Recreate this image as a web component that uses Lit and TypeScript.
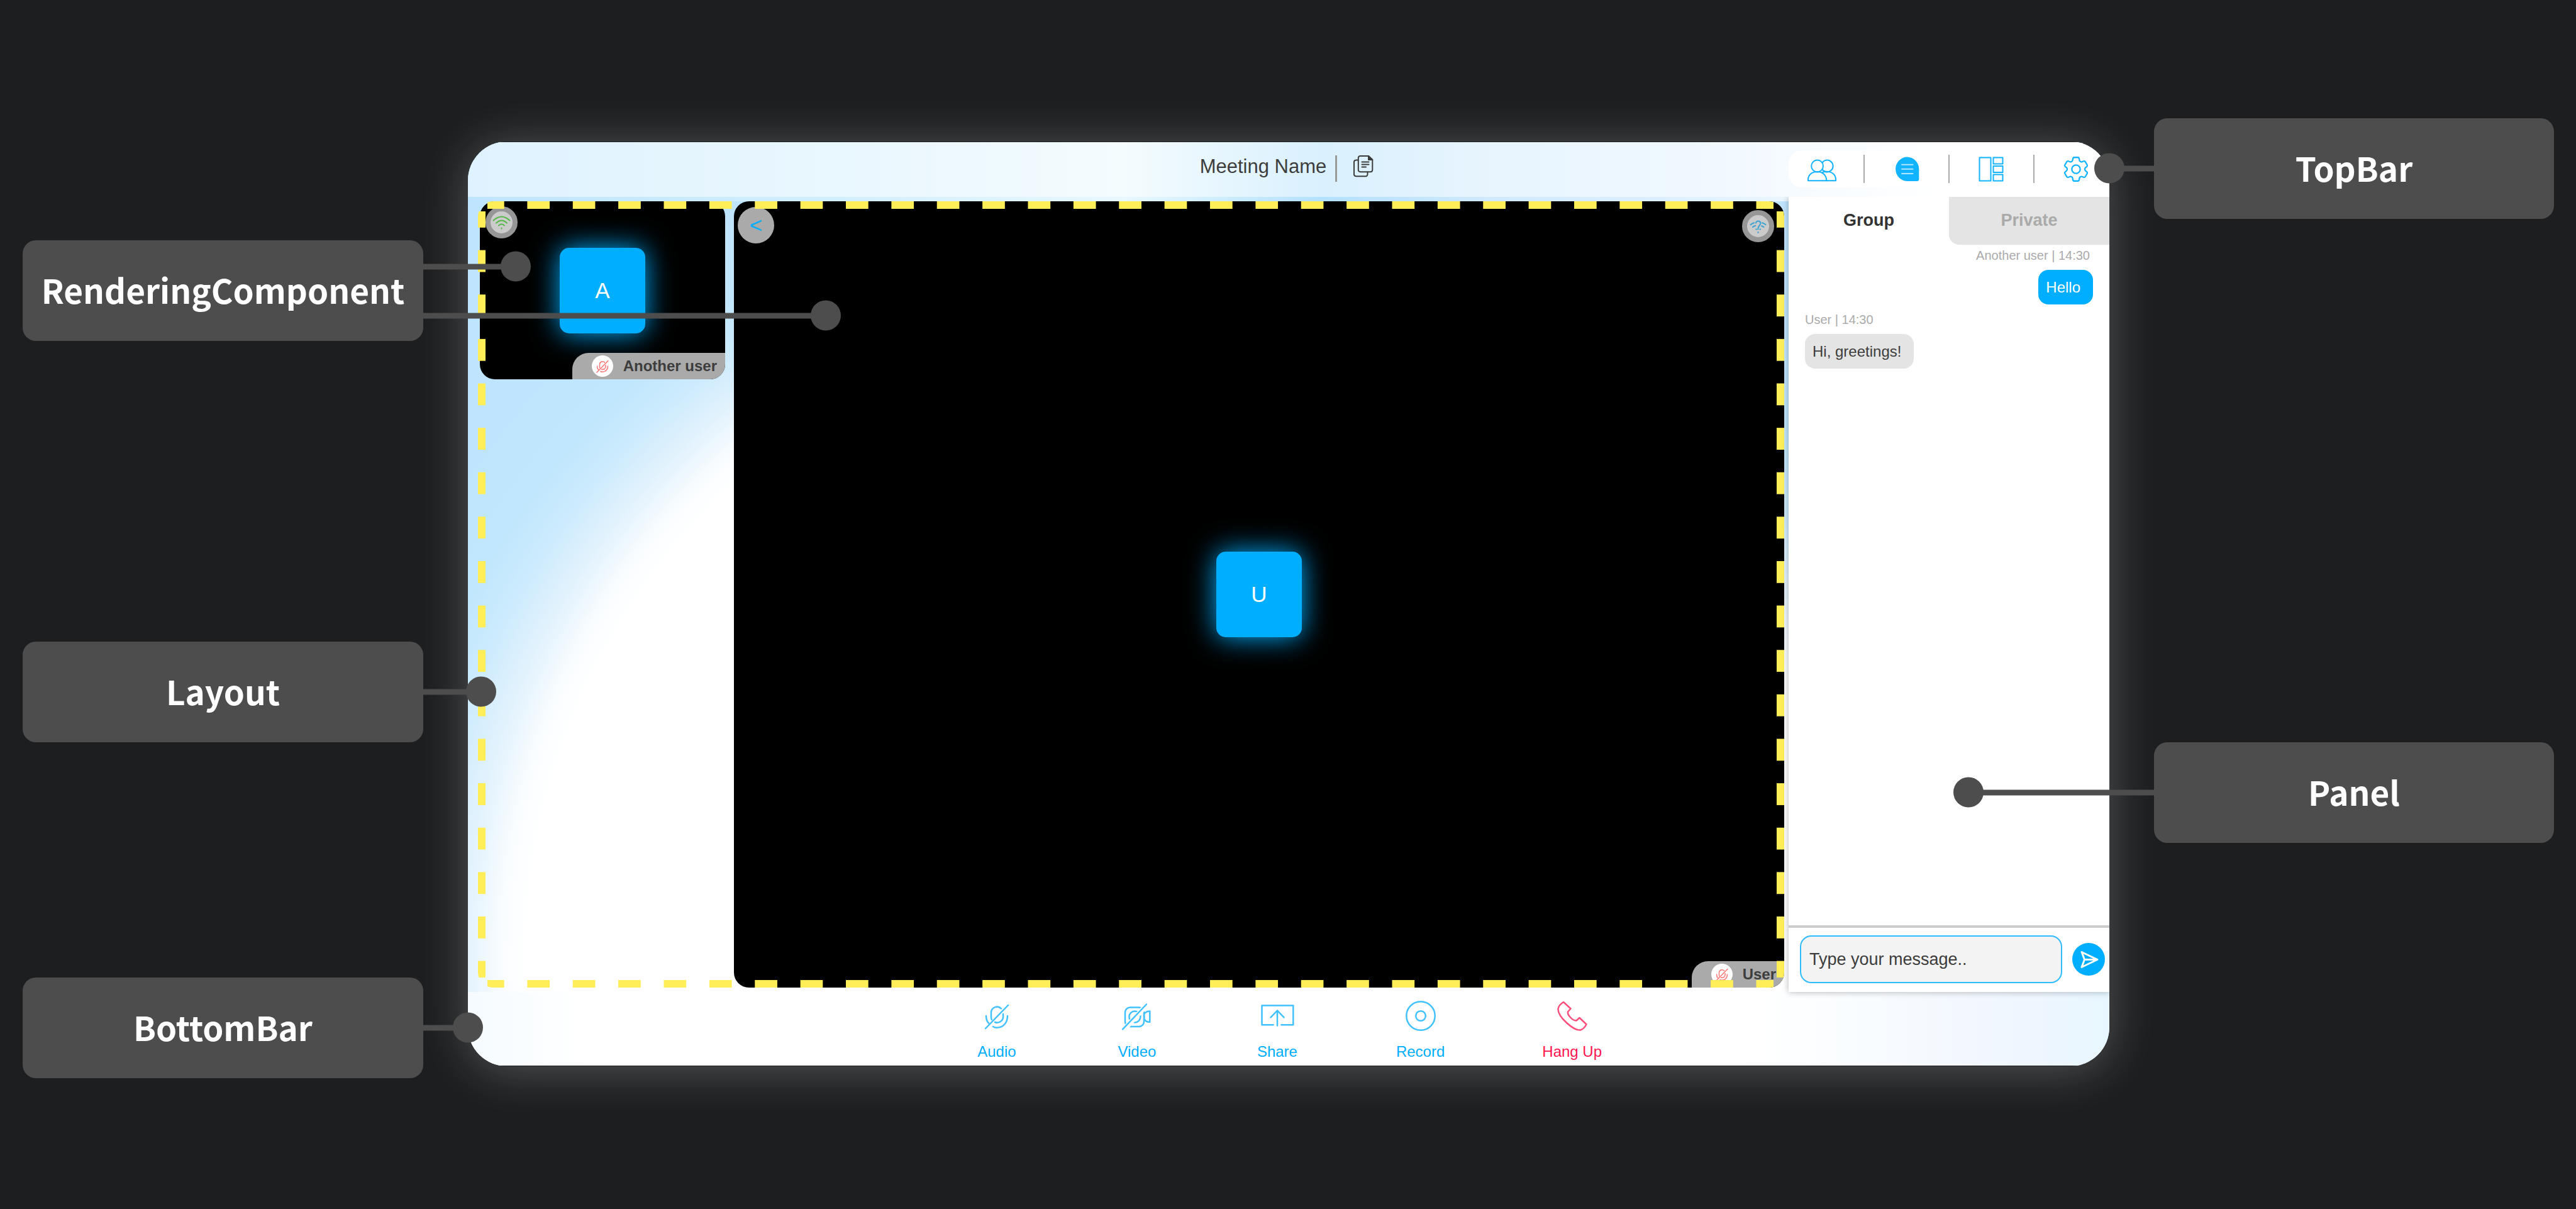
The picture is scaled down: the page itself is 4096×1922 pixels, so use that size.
import { LitElement, html, css, svg } from "lit";
import { customElement, property, state } from "lit/decorators.js";
import { classMap } from "lit/directives/class-map.js";
import { styleMap } from "lit/directives/style-map.js";

const micOff = svg`
  <path d="M37 18.5A9.3 9.3 0 0 0 21 24V32C21 33.5 21.2 34.6 21.8 36" />
  <path d="M40 27V32A9.5 9.5 0 0 1 27 40" />
  <path d="M13 30C13 35 14 38.5 17 41.5" />
  <path d="M24 47C26 48.3 28 48.7 30 48.7C40 48.7 47 41 47 30" />
  <path d="M12 50L48 13" />`;

const icons = {
  copy: svg`
    <path d="M7.5 7.5H4A3.3 3.3 0 0 0 1 11V30A3.3 3.3 0 0 0 4 33.3H19A3.3 3.3 0 0 0 22.5 30V26.5" />
    <path d="M24 1H11A3.3 3.3 0 0 0 7.8 4.3V23A3.3 3.3 0 0 0 11 26.2H27A3.3 3.3 0 0 0 30.3 23V7Z" />
    <path d="M24 1V7H30.3Z" fill="currentColor" />
    <path d="M13.5 10.5H24.5M13.5 14.5H24.5M13.5 18.5H20" />`,
  people: svg`
    <circle cx="17.6" cy="20" r="9.4" />
    <path d="M26 14A9.4 9.4 0 1 1 26 26" />
    <path d="M3 43.2V41.5C3 34 9 29 17.5 29S32 34 32.4 43.2Z" />
    <path d="M26 30C28 29 31 28.8 33 28.8C41 28.8 47 34 47 41.5V43.2H32" />`,
  chat: svg`
    <path d="M25 5.5A19.3 19.3 0 0 0 25 44H41.5A3 3 0 0 0 44.3 41V25A19.4 19.4 0 0 0 25 5.5Z" fill="currentColor" stroke="none" />
    <path d="M17 17.7H34.5M17 24.8H34.5M17 31.9H34.5" stroke="#b4e6ff" />`,
  layout: svg`
    <rect x="6.5" y="6.5" width="18" height="37" />
    <rect x="28.5" y="6.5" width="15" height="10" />
    <rect x="28.5" y="20" width="15" height="10" />
    <rect x="28.5" y="33.5" width="15" height="10" />`,
  gear: svg`
    <g transform="scale(2.0833)" stroke-width="1.1">
      <path d="M9.594 3.94c.09-.542.56-.94 1.11-.94h2.593c.55 0 1.02.398 1.11.94l.213 1.281c.063.374.313.686.645.87.074.04.147.083.22.127.325.196.72.257 1.075.124l1.217-.456a1.125 1.125 0 0 1 1.37.49l1.296 2.247a1.125 1.125 0 0 1-.26 1.431l-1.003.827c-.293.241-.438.613-.43.992a7.723 7.723 0 0 1 0 .255c-.008.378.137.75.43.991l1.004.827c.424.35.534.955.26 1.43l-1.298 2.247a1.125 1.125 0 0 1-1.369.491l-1.217-.456c-.355-.133-.75-.072-1.076.124a6.47 6.47 0 0 1-.22.128c-.331.183-.581.495-.644.869l-.213 1.281c-.09.543-.56.94-1.11.94h-2.594c-.55 0-1.019-.398-1.11-.94l-.213-1.281c-.062-.374-.312-.686-.644-.87a6.52 6.52 0 0 1-.22-.127c-.325-.196-.72-.257-1.076-.124l-1.217.456a1.125 1.125 0 0 1-1.369-.49l-1.297-2.247a1.125 1.125 0 0 1 .26-1.431l1.004-.827c.292-.24.437-.613.43-.991a6.932 6.932 0 0 1 0-.255c.007-.38-.138-.751-.43-.992l-1.004-.827a1.125 1.125 0 0 1-.26-1.43l1.297-2.247a1.125 1.125 0 0 1 1.37-.491l1.216.456c.356.133.751.072 1.076-.124.072-.044.146-.086.22-.128.332-.183.582-.495.644-.869l.214-1.28Z" />
      <circle cx="12" cy="12" r="3.2" />
    </g>`,
  audio: micOff,
  video: svg`
    <rect x="11" y="16.5" width="30" height="30.5" rx="8" />
    <circle cx="26.4" cy="31.5" r="9" />
    <path d="M50.3 22.6V39.8C46 40 43 38 41.2 35V27C43 24.5 46 22.6 50.3 22.6Z" />
    <path d="M8 53L45 13" stroke="#fff" stroke-width="8" />
    <path d="M7 51.4L45 11.5" />`,
  share: svg`
    <path d="M23.6 44.3H5.5V13.6H55.3V44.3H36.4" />
    <path d="M30 45.5V21.5M19.5 32.4L30 21.5L40.5 32.4" />`,
  record: svg`
    <circle cx="30" cy="30" r="22.7" />
    <circle cx="30" cy="30" r="7.8" />`,
  phone: svg`
    <path d="M16 8L27.5 18.5L23 23.5C22 29 31 38 36.5 37.5L41.5 33L52.5 43.5C50 48 46.5 51.5 43 52.5C32 54 6.5 31 7.5 18.5C8.5 14 12 10.5 16 8Z" />`,
  send: svg`<path d="M15 14.5L40 26.5L15 38.5L19.5 26.5ZM19.5 26.5H40" />`,
  wifi: svg`
    <path d="M4.5 14.5Q17.5 2.5 30.5 14.5M9 18.5Q17.5 10.5 26 18.5M13 22.5Q17.5 18 22 22.5M17.5 26.5V27.5" />`,
  wifiUnknown: svg`
    <path d="M5.6 15.2Q8 13 11 12.2M24 12.2Q27 13 29.6 15.2M9 19Q10.5 17.5 13.2 16.8M23 17.2Q25 17.5 26.4 19M14.2 22.6H15M20.4 22.6H21.2M17.5 27V28" />
    <path d="M14 12.6C14 8.4 21.4 8.4 21.4 13C21.4 16.2 17.2 16.8 17.4 22.4" />`,
};

type IconName = keyof typeof icons;

const drawIcon = (name: IconName, width: number, height: number, view = `0 0 ${width} ${height}`) => html`
  <svg class="icon" width=${width} height=${height} viewBox=${view} aria-hidden="true">${icons[name]}</svg>
`;

interface Connector {
  top: string;
  length: number;
}

@customElement("call-out")
export class CallOut extends LitElement {
  @property() label = "";
  @property() side: "left" | "right" = "left";
  @property({ attribute: false }) connectors: Connector[] = [];

  static styles = css`
    :host {
      position: relative;
      z-index: 2;
      display: flex;
      align-items: center;
      justify-content: center;
      padding-bottom: 4px;
      border-radius: 21px;
      background: #4d4d4d;
      color: #fff;
      font: 700 53px/84px "Noto Sans CJK SC", "Open Sans", sans-serif;
    }
    .connector {
      position: absolute;
      height: 9px;
      background: #4d4d4d;
      transform: translateY(-50%);
    }
    .left { left: 100%; }
    .right { right: 100%; }
    .connector::after {
      content: "";
      position: absolute;
      top: -20px;
      width: 48px;
      height: 48px;
      border-radius: 50%;
      background: #4d4d4d;
    }
    .left::after { right: -24px; }
    .right::after { left: -24px; }
  `;

  render() {
    return html`
      <span>${this.label}</span>
      ${this.connectors.map(
        (c) => html`<span
          class=${classMap({ connector: true, [this.side]: true })}
          style=${styleMap({ top: c.top, width: `${c.length}px` })}
        ></span>`
      )}
    `;
  }
}

interface Message {
  author: string;
  time: string;
  text: string;
  own: boolean;
}

@customElement("app-root")
export class AppRoot extends LitElement {
  @state() private messages: Message[] = [
    { author: "Another user", time: "14:30", text: "Hello", own: false },
    { author: "User", time: "14:30", text: "Hi, greetings!", own: true },
  ];

  private menu: { icon: IconName; label: string }[] = [
    { icon: "people", label: "Participants" },
    { icon: "chat", label: "Chat" },
    { icon: "layout", label: "Layout" },
    { icon: "gear", label: "Settings" },
  ];

  private actions: { icon: IconName; label: string; danger?: boolean }[] = [
    { icon: "audio", label: "Audio" },
    { icon: "video", label: "Video" },
    { icon: "share", label: "Share" },
    { icon: "record", label: "Record" },
    { icon: "phone", label: "Hang Up", danger: true },
  ];

  static styles = css`
    :host {
      display: block;
      font-family: "Liberation Sans", Arial, sans-serif;
    }
    * { box-sizing: border-box; }
    button {
      margin: 0;
      padding: 0;
      border: 0;
      background: none;
      color: inherit;
      font: inherit;
      cursor: pointer;
    }
    .icon {
      display: block;
      flex: none;
      fill: none;
      stroke: currentColor;
      stroke-width: 2;
      stroke-linecap: round;
      stroke-linejoin: round;
    }
    .page {
      display: grid;
      grid-template-columns: 637px minmax(0, 1fr) 636px;
      column-gap: 71px;
      min-height: 100vh;
      padding: 0 35px 0 36px;
      background: #1d1e20;
      overflow: hidden;
    }
    .notes { display: grid; }
    .notes-left { grid-template-rows: 382fr 160px 478fr 160px 374fr 160px 208fr; }
    .notes-right { grid-template-rows: 188fr 160px 832fr 160px 582fr; }
    .row-2 { grid-row: 2; }
    .row-4 { grid-row: 4; }
    .row-6 { grid-row: 6; }

    .stage {
      display: flex;
      padding: 225px 0 227px;
    }
    .frame {
      flex: 1;
      display: flex;
      min-width: 0;
      padding: 1px 0;
      border-radius: 62px;
      overflow: hidden;
      box-shadow: 0 6px 76px rgba(255, 255, 255, 0.25);
    }
    .window {
      flex: 1;
      display: flex;
      flex-direction: column;
      min-width: 0;
      background:
        linear-gradient(90deg, #bfe5fe 0%, #d4effc 24%, #e8f8fd 40%, #b3e1fd 52%, #cfe9fd 62%, #e2f2ff 76%, #fff 90%) 0 0 / 100% 94px no-repeat,
        radial-gradient(circle 1400px at 1133px 1306px, #fff 74%, #fafdff 77%, #e4f3fd 81%, #cdebfd 86%, #c0e7fd 91%, #bfe5fe 100%);
    }

    .topbar {
      display: grid;
      grid-template-columns: 1fr auto 1fr;
      height: 87px;
      background: rgba(255, 255, 255, 0.5);
    }
    .title {
      grid-column: 2;
      display: flex;
      align-items: flex-start;
      padding: 21px 6px 0 0;
      color: #3d3d3d;
    }
    .title h1 {
      margin: 0;
      font-size: 31px;
      font-weight: 400;
      line-height: 36px;
    }
    .title .bar {
      width: 3px;
      height: 42px;
      margin: 0 26px 0 14px;
      background: #999;
    }
    .menu {
      justify-self: end;
      align-self: start;
      display: flex;
      align-items: center;
      justify-content: space-between;
      width: 510px;
      height: 59px;
      margin-top: 13px;
      padding: 0 28px;
      border-radius: 21px 0 0 21px;
      background: #fff;
      color: #12b3ff;
    }
    .menu .bar {
      width: 2px;
      height: 45px;
      background: #aaa;
    }

    .body {
      flex: 1;
      display: flex;
      min-height: 0;
    }
    .meeting {
      position: relative;
      flex: 1;
      display: grid;
      grid-template-columns: 390px minmax(0, 1fr);
      gap: 14px;
      align-items: start;
      padding: 7px 7px 7px 19px;
    }
    .outline {
      --dash: #ffee58;
      position: absolute;
      inset: 7px 7px 7px 16px;
      border-radius: 24px;
      overflow: hidden;
      pointer-events: none;
    }
    .outline::before,
    .outline::after {
      content: "";
      position: absolute;
    }
    .outline::before {
      inset: 0 8px 0 6px;
      background:
        linear-gradient(90deg, var(--dash) 50%, transparent 0) 0 0 / calc(100% / 28.5) 12px repeat-x,
        linear-gradient(90deg, var(--dash) 50%, transparent 0) 0 100% / calc(100% / 28.5) 12px repeat-x;
      clip-path: inset(0 9px);
    }
    .outline::after {
      inset: 7px 0;
      background:
        linear-gradient(var(--dash) 50%, transparent 0) 0 0 / 12px calc(100% / 17.5) repeat-y,
        linear-gradient(var(--dash) 50%, transparent 0) 100% 0 / 12px calc(100% / 17.5) repeat-y;
      clip-path: inset(9px 0);
    }
    .tile {
      position: relative;
      display: flex;
      align-items: center;
      justify-content: center;
      border-radius: 24px;
      overflow: hidden;
      background: #000;
    }
    .small { height: 283px; }
    .large { align-self: stretch; }
    .avatar {
      display: flex;
      align-items: center;
      justify-content: center;
      width: 136px;
      height: 136px;
      border-radius: 15px;
      background: #00aeff;
      box-shadow: 0 0 44px #00aeff;
      color: #fff;
      font-size: 35px;
    }
    .badge {
      position: absolute;
      display: flex;
      align-items: center;
      justify-content: center;
      width: 51px;
      height: 51px;
      border: 8px solid #969696;
      border-radius: 50%;
      background: #cbcbcb;
    }
    .good { top: 8px; left: 9px; color: #55b948; }
    .unknown { top: 14px; right: 16px; color: #3aa3d3; }
    .collapse {
      position: absolute;
      top: 9px;
      left: 6px;
      width: 58px;
      height: 58px;
      border-radius: 50%;
      background: #aaa;
      color: #00aeff;
      font-size: 35px;
    }
    .name {
      position: absolute;
      right: 0;
      bottom: 0;
      display: flex;
      align-items: center;
      gap: 16px;
      height: 42px;
      padding: 0 13px 0 31px;
      border-radius: 26px 0 0 0;
      background: #aaa;
      color: #3d3d3d;
      font-size: 24px;
      font-weight: 700;
    }
    .muted {
      display: flex;
      align-items: center;
      justify-content: center;
      width: 34px;
      height: 34px;
      border-radius: 50%;
      background: #fff;
      color: #ff7575;
    }
    .muted .icon { stroke-width: 3; }

    .panel {
      display: flex;
      flex-direction: column;
      width: 510px;
      background: #fff;
      box-shadow: 0 0 10px rgba(0, 0, 0, 0.3);
      clip-path: inset(0 0 -20px -20px);
    }
    .tabs {
      display: grid;
      grid-template-columns: 1fr 1fr;
      height: 76px;
    }
    .tab {
      padding-bottom: 2px;
      color: #333;
      font-size: 27px;
      font-weight: 700;
      line-height: 74px;
    }
    .tab-idle {
      border-radius: 0 0 0 16px;
      background: #e4e4e4;
      color: #aaa;
    }
    .messages {
      flex: 1;
      display: flex;
      flex-direction: column;
      gap: 12px;
      padding: 5px 26px;
    }
    .message {
      display: flex;
      flex-direction: column;
      align-items: flex-start;
      gap: 11px;
    }
    .meta {
      color: #aaa;
      font-size: 20px;
      line-height: 24px;
    }
    .bubble {
      padding: 0 20px 0 12px;
      border-radius: 16px;
      background: #e4e4e4;
      color: #3d3d3d;
      font-size: 24px;
      line-height: 55px;
    }
    .incoming { align-items: flex-end; }
    .incoming .meta { padding-right: 5px; }
    .incoming .bubble { background: #00aeff; color: #fff; }
    .composer {
      display: flex;
      align-items: center;
      gap: 16px;
      padding: 12px 7px 14px 18px;
      border-top: 4px solid #ccc;
    }
    .composer input {
      flex: 1;
      min-width: 0;
      height: 76px;
      padding: 0 13px;
      border: 2px solid #2fbcff;
      border-radius: 18px;
      background: #f3f3f3;
      color: #3d3d3d;
      font: inherit;
      font-size: 27px;
      outline: none;
    }
    .composer input::placeholder { color: #3d3d3d; opacity: 1; }
    .send {
      width: 52px;
      height: 52px;
      border-radius: 50%;
      background: #00aeff;
      color: #fff;
    }
    .send .icon { stroke-width: 3; }

    .bottombar {
      display: flex;
      justify-content: center;
      gap: 155px;
      padding: 8px 0 7px;
      background: linear-gradient(90deg, #f5fbff 0%, #fff 7%, #fff 78%, #fafdff 84%, #f3f8ff 91%, #eff6ff 95%, #e8f7ff 100%);
    }
    .action {
      display: flex;
      flex-direction: column;
      align-items: center;
      gap: 12px;
      min-width: 68px;
      color: #00aeff;
      font-size: 24px;
      line-height: 30px;
    }
    .action .icon { opacity: 0.75; stroke-width: 2.5; }
    .danger { color: #ff1450; }
  `;

  private renderName(name: string) {
    return html`
      <div class="name">
        <span class="muted">${drawIcon("audio", 30, 30, "0 0 60 60")}</span>
        <span>${name}</span>
      </div>
    `;
  }

  render() {
    return html`
      <main class="page">
        <div class="notes notes-left">
          <call-out
            class="row-2"
            label="RenderingComponent"
            .connectors=${[{ top: "26%", length: 147 }, { top: "75%", length: 640 }]}
          ></call-out>
          <call-out class="row-4" label="Layout" .connectors=${[{ top: "50%", length: 92 }]}></call-out>
          <call-out class="row-6" label="BottomBar" .connectors=${[{ top: "50%", length: 71 }]}></call-out>
        </div>

        <div class="stage">
          <div class="frame">
            <div class="window">
              <header class="topbar">
                <div class="title">
                  <h1>Meeting Name</h1>
                  <span class="bar"></span>
                  <button aria-label="Copy link">${drawIcon("copy", 32, 36)}</button>
                </div>
                <nav class="menu">
                  ${this.menu.map(
                    (item, i) => html`
                      ${i ? html`<span class="bar"></span>` : ""}
                      <button aria-label=${item.label}>${drawIcon(item.icon, 50, 50)}</button>
                    `
                  )}
                </nav>
              </header>

              <div class="body">
                <section class="meeting">
                  <div class="tile small">
                    <div class="avatar">A</div>
                    <span class="badge good">${drawIcon("wifi", 35, 35)}</span>
                    ${this.renderName("Another user")}
                  </div>
                  <div class="tile large">
                    <div class="avatar">U</div>
                    <button class="collapse">&lt;</button>
                    <span class="badge unknown">${drawIcon("wifiUnknown", 35, 35)}</span>
                    ${this.renderName("User")}
                  </div>
                  <div class="outline"></div>
                </section>

                <aside class="panel">
                  <div class="tabs">
                    <button class="tab">Group</button>
                    <button class="tab tab-idle">Private</button>
                  </div>
                  <div class="messages">
                    ${this.messages.map(
                      (m) => html`
                        <div class=${classMap({ message: true, incoming: !m.own })}>
                          <span class="meta">${m.author} | ${m.time}</span>
                          <span class="bubble">${m.text}</span>
                        </div>
                      `
                    )}
                  </div>
                  <form class="composer" @submit=${(e: Event) => e.preventDefault()}>
                    <input type="text" aria-label="Message" placeholder="Type your message.." />
                    <button class="send" aria-label="Send">${drawIcon("send", 52, 52)}</button>
                  </form>
                </aside>
              </div>

              <footer class="bottombar">
                ${this.actions.map(
                  (a) => html`
                    <button class=${classMap({ action: true, danger: !!a.danger })}>
                      ${drawIcon(a.icon, 60, 60)}
                      <span>${a.label}</span>
                    </button>
                  `
                )}
              </footer>
            </div>
          </div>
        </div>

        <div class="notes notes-right">
          <call-out class="row-2" side="right" label="TopBar" .connectors=${[{ top: "50%", length: 71 }]}></call-out>
          <call-out class="row-4" side="right" label="Panel" .connectors=${[{ top: "50%", length: 295 }]}></call-out>
        </div>
      </main>
    `;
  }
}
